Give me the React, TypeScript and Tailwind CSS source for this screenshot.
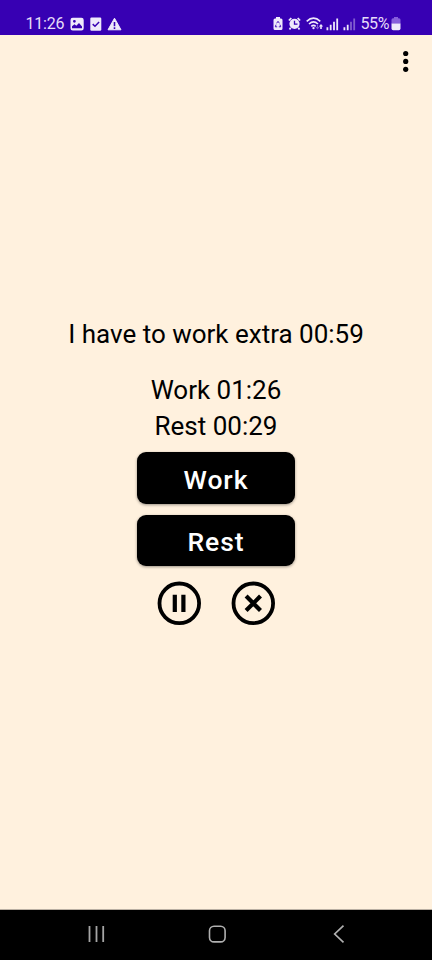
import type { ReactNode } from "react";

const light = "#efe9fb";

function StatusBar() {
  return (
    <header className="flex h-[35px] shrink-0 items-start bg-[#3700b3] pt-[14px] text-[16px] leading-[20px] text-[#e6dcf8]">
      <span className="ml-[25.5px] w-[44.5px] tracking-[-0.2px]">11:26</span>
      <svg className="mt-[3px]" width="14" height="15" viewBox="0 0 14 15" fill={light}>
        <path
          fillRule="evenodd"
          d="M2.8.8h8.6a2.3 2.3 0 0 1 2.3 2.3v8.2a2.3 2.3 0 0 1-2.3 2.3H2.8A2.3 2.3 0 0 1 .5 11.300V3.100A2.300 2.300 0 0 1 2.800.800zM2 9.200v2h10V9.500L9 6 6.300 8.800 4.500 7.200zM4.400 2.900a1.400 1.400 0 1 0 0 2.800 1.400 1.400 0 0 0 0-2.800z"
        />
      </svg>
      <svg className="ml-[6px] mt-[3px]" width="12" height="15" viewBox="0 0 12 15">
        <rect x=".3" y=".5" width="11" height="13.200" rx="1.200" fill={light} />
        <path d="M2.700 7.100l2.300 2.200 4.100-4.200" fill="none" stroke="#3700b3" strokeWidth="1.500" />
      </svg>
      <svg className="ml-[5px] mt-[3px]" width="16" height="15" viewBox="0 0 16 15">
        <path d="M7.500 1.200L14 12.800H1z" fill={light} stroke={light} strokeLinejoin="round" />
        <path d="M7.500 5v4.200M7.500 10.200v1.800" stroke="#3700b3" strokeWidth="1.600" />
      </svg>
      <svg className="ml-auto mt-[3px]" width="10" height="15" viewBox="0 0 10 15">
        <path d="M3 0h4v1.500h1A1.500 1.500 0 0 1 9.500 3v8.600A1.500 1.500 0 0 1 8 13.100H2a1.500 1.500 0 0 1-1.500-1.500V3A1.500 1.500 0 0 1 2 1.500h1z" fill={light} />
        <path d="M3.600 6.300L5 4.300 6.400 6.300M7 7.700L7.700 9.800H5.800M4.200 9.800H2.300L3 7.700" fill="none" stroke="#3700b3" strokeWidth=".9" />
      </svg>
      <svg className="ml-[5px] mt-[3px]" width="14" height="15" viewBox="0 0 14 15">
        <circle cx="6.500" cy="6.800" r="5.100" fill={light} />
        <path d="M.9 3.500L3.300 1M12.100 3.500L9.700 1M2.700 10.800L1.500 12.500M10.300 10.800l1.200 1.700" stroke={light} strokeWidth="1.800" />
        <path d="M6.500 3.700v3.500h3" fill="none" stroke="#3700b3" strokeWidth="1.300" />
      </svg>
      <svg className="ml-[4px] mt-[3px]" width="18" height="15" viewBox="0 0 18 15" fill="none">
        <path d="M.7 4.400Q7.500-2 14.300 4.400M3 7Q7.500 2.900 12 7M5.300 9.400q2.200-1.900 4.400 0" stroke={light} strokeWidth="1.600" />
        <circle cx="7.500" cy="11.100" r="1.200" fill={light} />
        <path d="M11 8v2H9.500l2 2.500 2-2.500H12V8z" fill="#7d58d0" />
        <path d="M14.200 12V9.600h-1.400L15 7l2.200 2.600h-1.400V12z" fill={light} />
      </svg>
      <svg className="ml-[2px] mt-[4px]" width="13" height="15" viewBox="0 0 13 15" fill={light}>
        <path d="M.5 9.300h1.800v2.900H.5zM3.800 6.800h1.800v5.400H3.800zM7.100 3.800h1.800v8.400H7.100zM10.300.6h1.800v11.600h-1.800z" />
      </svg>
      <svg className="ml-[4px] mt-[4px]" width="13" height="15" viewBox="0 0 13 15" fill={light}>
        <path d="M.5 9.300h1.800v2.900H.5zM3.800 6.800h1.800v5.400H3.800z" />
        <path d="M7.100 3.800h1.800v8.400H7.100zM10.300.6h1.800v11.600h-1.800z" fillOpacity=".4" />
      </svg>
      <span className="ml-[4.5px] w-[30.5px] tracking-[-0.4px]">55%</span>
      <svg className="mr-[31px] mt-[3px]" width="10" height="15" viewBox="0 0 10 15">
        <path d="M3 0h4v1.300h1A1.500 1.500 0 0 1 9.500 2.800V6.800h-9V2.800A1.500 1.500 0 0 1 2 1.300h1z" fill="#875edc" />
        <path d="M.5 6.500h9v5A1.700 1.700 0 0 1 7.800 13.200H2.200A1.700 1.700 0 0 1 .5 11.500z" fill={light} />
      </svg>
    </header>
  );
}

function TimerButton({ children }: { children: ReactNode }) {
  return (
    <button className="flex h-[51.5px] w-[157.5px] items-center justify-center rounded-[9px] bg-black pt-[3px] text-[26.5px] leading-[32px] font-medium tracking-[0.9px] text-white shadow-[0_1px_3px_rgba(0,0,0,0.4)]">
      {children}
    </button>
  );
}

function RoundButton({ label, path, stroke }: { label: string; path: string; stroke: number }) {
  return (
    <button aria-label={label}>
      <svg width="44" height="44" viewBox="0 0 44 44" fill="none" stroke="#000">
        <circle cx="22.300" cy="22.300" r="19.800" strokeWidth="3.800" />
        <path d={path} strokeWidth={stroke} />
      </svg>
    </button>
  );
}

export default function App() {
  return (
    <div className="flex h-[960px] w-[432px] flex-col overflow-hidden bg-[#fff1de] font-[Roboto,sans-serif] text-black">
      <StatusBar />
      <div className="flex h-[52px] shrink-0 justify-end pt-[14px] pr-[20px]">
        <button aria-label="More options" className="h-[26px]">
          <svg width="12" height="26" viewBox="0 0 12 26">
            <circle cx="5.700" cy="4.500" r="2.600" />
            <circle cx="5.700" cy="12.400" r="2.600" />
            <circle cx="5.700" cy="20.300" r="2.600" />
          </svg>
        </button>
      </div>
      <main className="flex flex-1 flex-col items-center pt-[230px]">
        <p className="text-[26px] leading-[35px]">I have to work extra 00:59</p>
        <p className="mt-[21px] text-[26px] leading-[35px]">Work 01:26</p>
        <p className="mt-[1px] text-[26px] leading-[35px]">Rest 00:29</p>
        <div className="mt-[8.3px] flex flex-col gap-[11px]">
          <TimerButton>Work</TimerButton>
          <TimerButton>Rest</TimerButton>
        </div>
        <div className="mt-[14.7px] flex gap-[30px]">
          <RoundButton label="Pause" path="M17.800 13.700v17.300M26.400 13.700v17.300" stroke={4.2} />
          <RoundButton label="Stop" path="M15.100 15.100l14.400 14.400M29.500 15.100L15.100 29.500" stroke={4.2} />
        </div>
      </main>
      <nav className="flex h-[51px] shrink-0 items-start border-t border-[#b9afa2] bg-black pt-[14px]">
        <svg className="ml-[87px]" width="19" height="20" viewBox="0 0 19 20" stroke="#a5a5a5" strokeWidth="1.800">
          <path d="M2.500 2v16M9.500 2v16M16.200 2v16" />
        </svg>
        <svg className="ml-[101px]" width="20" height="20" viewBox="0 0 20 20" fill="none" stroke="#b0b0b0" strokeWidth="1.600">
          <rect x="2.500" y="2.300" width="15.600" height="15.600" rx="4.500" />
        </svg>
        <svg className="ml-[105px]" width="14" height="20" viewBox="0 0 14 20" fill="none" stroke="#b0b0b0" strokeWidth="1.700">
          <path d="M11.500 1.700L2.700 10l8.800 8.300" />
        </svg>
      </nav>
    </div>
  );
}
